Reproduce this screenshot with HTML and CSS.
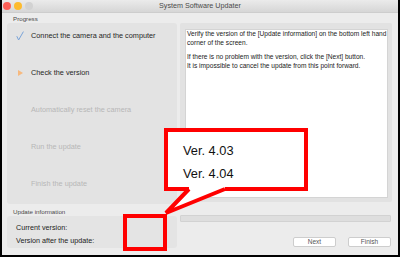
FILE: index.html
```html
<!DOCTYPE html>
<html>
<head>
<meta charset="utf-8">
<title>System Software Updater</title>
<link rel="stylesheet" href="styles.css">
</head>
<body>
<div class="window">
  <div class="titlebar">
    <div class="lights">
      <span class="light red"></span>
      <span class="light yellow"></span>
      <span class="light gray"></span>
    </div>
    <div class="title">System Software Updater</div>
  </div>
  <div class="content">
    <div class="label label-progress">Progress</div>
    <div class="steps">
      <div class="step done">
        <span class="icon"><svg width="8" height="10" viewBox="0 0 8 10"><polyline points="0.8,5.2 2.6,9 7.4,0.6" fill="none" stroke="#79a3d8" stroke-width="1"/></svg></span>
        <span>Connect the camera and the computer</span>
      </div>
      <div class="step current">
        <span class="icon"><svg width="8" height="10" viewBox="0 0 8 10"><polygon points="2,2 7,5 2,8" fill="#f7b97e"/></svg></span>
        <span>Check the version</span>
      </div>
      <div class="step pending"><span class="icon"></span><span>Automatically reset the camera</span></div>
      <div class="step pending"><span class="icon"></span><span>Run the update</span></div>
      <div class="step pending"><span class="icon"></span><span>Finish the update</span></div>
    </div>
    <div class="info-pane">
      <div class="info-text">
        <p>Verify the version of the [Update information] on the bottom left hand<br>corner of the screen.</p>
        <p>If there is no problem with the version, click the [Next] button.<br>It is impossible to cancel the update from this point forward.</p>
      </div>
    </div>
    <div class="label label-update">Update information</div>
    <div class="versions">
      <div>Current version:</div>
      <div>Version after the update:</div>
    </div>
    <div class="actions">
      <div class="progressbar"></div>
      <div class="buttons">
        <button class="btn">Next</button>
        <button class="btn">Finish</button>
      </div>
    </div>
  </div>
</div>
<div class="callout">
  <div>Ver. 4.03</div>
  <div>Ver. 4.04</div>
</div>
<svg class="callout-tail" width="400" height="260" viewBox="0 0 400 260">
  <polygon points="189,185 225,185 225,189 166,213 189,189" fill="#ffffff"/>
  <polyline points="189,189 166,213 225,189" fill="none" stroke="#ff0000" stroke-width="4" stroke-linejoin="miter"/>
</svg>
<div class="callout-target"></div>
</body>
</html>
```

FILE: styles.css
```css
html, body {
  margin: 0;
  padding: 0;
}
body {
  width: 400px;
  height: 260px;
  background: #ffffff;
  overflow: hidden;
  position: relative;
  font-family: "Liberation Sans", Arial, sans-serif;
}
.window {
  width: 400px;
  height: 257px;
  box-sizing: border-box;
  border: 2px solid #000;
  border-top: none;
  background: #ececec;
}
.titlebar {
  height: 12px;
  border-bottom: 1px solid #cdcdcd;
  background: linear-gradient(#ebebeb, #d6d6d6);
  position: relative;
  display: flex;
  align-items: center;
  justify-content: center;
}
.lights {
  position: absolute;
  left: 1px;
  top: 1.5px;
  display: flex;
  gap: 3px;
}
.light {
  width: 8px;
  height: 8px;
  border-radius: 50%;
  display: block;
}
.red { background: #fc5f57; }
.yellow { background: #fdbb2e; }
.gray { background: #d2d2d2; }
.title {
  font-size: 7.2px;
  color: #4a4a4a;
  line-height: 12px;
}
.content {
  display: grid;
  grid-template-columns: 170px 212px;
  grid-template-rows: 10px 181px 12px 32px;
  column-gap: 3px;
  padding: 0 5px 7px 5px;
}
.label {
  font-size: 6.2px;
  color: #4a4a4a;
  padding-left: 6px;
}
.label-progress {
  grid-column: 1;
  grid-row: 1;
  line-height: 10px;
  padding-top: 1px;
}
.label-update {
  grid-column: 1;
  grid-row: 3;
  line-height: 9px;
  padding-top: 3px;
}
.steps {
  grid-column: 1;
  grid-row: 2;
  background: #e3e3e3;
  border-radius: 3px;
  padding-top: 8px;
  display: flex;
  flex-direction: column;
  gap: 27px;
}
.step {
  height: 10px;
  line-height: 10px;
  font-size: 7.3px;
  padding-left: 9px;
  display: flex;
  align-items: center;
}
.step .icon {
  width: 8px;
  height: 10px;
  margin-right: 7px;
  display: flex;
  align-items: center;
}
.step.done, .step.current { color: #262626; }
.step.pending { color: #b7b7b7; }
.info-pane {
  grid-column: 2;
  grid-row: 2;
  height: 179px;
  box-sizing: border-box;
  background: #e2e2e2;
  border-radius: 2px;
  padding: 6px 4px 4px 5px;
}
.info-text {
  height: 100%;
  box-sizing: border-box;
  background: #ffffff;
  border: 1px solid #d4d4d4;
  padding: 0 0 0 1px;
  font-size: 6.6px;
  line-height: 8.5px;
  color: #222;
  white-space: nowrap;
  overflow: hidden;
}
.info-text p {
  margin: 0;
}
.info-text p + p {
  margin-top: 6px;
}
.versions {
  grid-column: 1;
  grid-row: 4;
  background: #e4e4e4;
  border-radius: 3px;
  padding: 4.5px 0 0 9px;
  font-size: 7.2px;
  line-height: 13px;
  color: #222;
}
.actions {
  grid-column: 2;
  grid-row: 3 / 5;
  display: flex;
  flex-direction: column;
}
.progressbar {
  margin-top: 11px;
  height: 7px;
  width: 211px;
  box-sizing: border-box;
  background: #dedede;
  border: 1px solid #d2d2d2;
  border-radius: 1px;
}
.buttons {
  margin-top: 15px;
  display: flex;
  justify-content: flex-end;
  gap: 12px;
  padding-right: 1px;
}
.btn {
  width: 43px;
  height: 10px;
  box-sizing: border-box;
  padding: 0;
  margin: 0;
  background: #ffffff;
  border: 1px solid #cdcdcd;
  border-radius: 2px;
  font-family: "Liberation Sans", Arial, sans-serif;
  font-size: 6.5px;
  line-height: 8px;
  color: #555;
}
.callout {
  position: absolute;
  left: 164px;
  top: 128px;
  width: 144px;
  height: 63px;
  box-sizing: border-box;
  border: 4px solid #ff0000;
  background: #ffffff;
  padding: 6.5px 0 0 15px;
  font-size: 12.8px;
  line-height: 23px;
  color: #111;
}
.callout-tail {
  position: absolute;
  left: 0;
  top: 0;
  pointer-events: none;
}
.callout-target {
  position: absolute;
  left: 123px;
  top: 214px;
  width: 44px;
  height: 37px;
  box-sizing: border-box;
  border: 4px solid #ff0000;
}
```
